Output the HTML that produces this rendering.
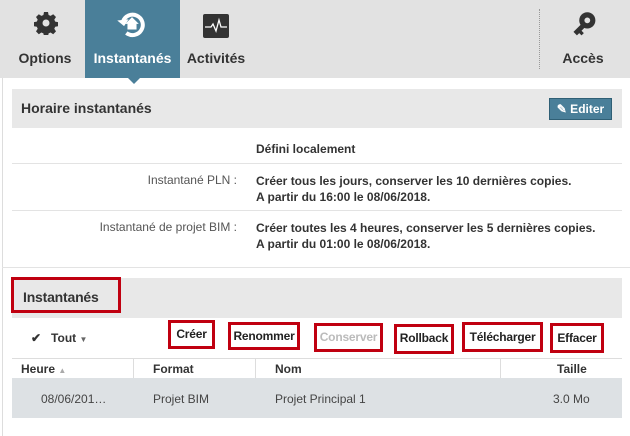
<!DOCTYPE html>
<html><head><meta charset="utf-8"><style>
*{box-sizing:border-box;margin:0;padding:0}
body{width:630px;height:436px;overflow:hidden;background:#fff;font-family:"Liberation Sans",sans-serif;color:#333;position:relative;font-size:12px}
.abs{position:absolute}
.top{left:0;top:0;width:630px;height:78px;background:#e2e2e2}
.tab{position:absolute;top:0;height:78px;text-align:center;font-weight:bold;font-size:14px;color:#333}
.tab .lbl{position:absolute;left:0;right:0;top:50px}
.rb{position:absolute;border:3px solid #c00010;font-weight:bold;font-size:12px;text-align:center;color:#222;letter-spacing:-0.2px}
</style></head><body>
<div class="abs top"></div>
<div class="tab" style="left:10px;width:70px">
<svg class="abs" style="left:24px;top:11px" width="24" height="24" viewBox="0 0 24 24"><path fill="#333" d="M10 1h4l.6 3 2 .9 2.6-1.7 2.8 2.8-1.7 2.6.9 2 3 .6v4l-3 .6-.9 2 1.7 2.6-2.8 2.8-2.6-1.7-2 .9-.6 3h-4l-.6-3-2-.9-2.6 1.7-2.8-2.8 1.7-2.6-.9-2-3-.6v-4l3-.6.9-2-1.7-2.6 2.8-2.8 2.6 1.7 2-.9z"/><circle cx="12" cy="12" r="3.5" fill="#e2e2e2"/></svg>
<div class="lbl">Options</div></div>
<div class="tab" style="left:85px;width:95px;background:#4a7f99;color:#fff">
<svg class="abs" style="left:30px;top:8px" width="34" height="34" viewBox="0 0 30 30"><path d="M7 12A9 9 0 1 1 10 22" fill="none" stroke="#fff" stroke-width="3.5"/><path d="M2 11l6 5 4-6z" fill="#fff"/><path d="M15 8l6 6h-2v5h-8v-5h-2z" fill="#fff"/></svg>
<div class="lbl">Instantanés</div>
<div class="abs" style="left:43px;top:78px;width:0;height:0;border-left:6px solid transparent;border-right:6px solid transparent;border-top:6px solid #4a7f99"></div></div>
<div class="tab" style="left:183px;width:66px">
<svg class="abs" style="left:20px;top:14px" width="26" height="24" viewBox="0 0 26 24"><rect width="26" height="24" rx="2" fill="#333"/><path d="M2 13h6l2-3 3 7 3-11 2 7h6" fill="none" stroke="#fff" stroke-width="1.3"/></svg>
<div class="lbl">Activités</div></div>
<div class="abs" style="left:539px;top:9px;height:60px;border-left:1px dotted #999"></div>
<div class="tab" style="left:553px;width:60px">
<svg class="abs" style="left:18px;top:10px" width="28" height="30" viewBox="0 0 24 26"><circle cx="14" cy="9" r="7" fill="#333"/><circle cx="14" cy="9" r="2.5" fill="#e2e2e2"/><path d="M9 12l-7 7 3 3 2-2 2 2 2-2-2-2 3-3z" fill="#333"/></svg>
<div class="lbl">Accès</div></div>

<div class="abs" style="left:2px;top:78px;height:358px;border-left:1px solid #ddd"></div>
<div class="abs" style="left:12px;top:89px;width:610px;height:39px;background:#e8e8e8"></div>
<div class="abs" style="left:21px;top:100px;font-size:14px;font-weight:bold;color:#333">Horaire instantanés</div>
<div class="abs" style="left:549px;top:98px;width:63px;height:22px;background:#4a7f99;border:1px solid #2f5f75;color:#fff;font-weight:bold;font-size:12px;line-height:20px;text-align:center">✎ Editer</div>
<div class="abs" style="left:256px;top:142px;font-weight:bold">Défini localement</div>
<div class="abs" style="left:12px;top:163px;width:610px;border-top:1px solid #e3e3e3"></div>
<div class="abs" style="left:0;width:237px;text-align:right;top:173px;color:#555">Instantané PLN :</div>
<div class="abs" style="left:256px;top:173px;font-weight:bold;line-height:16px">Créer tous les jours, conserver les 10 dernières copies.<br>A partir du 16:00 le 08/06/2018.</div>
<div class="abs" style="left:12px;top:210px;width:610px;border-top:1px solid #e3e3e3"></div>
<div class="abs" style="left:0;width:237px;text-align:right;top:220px;color:#555">Instantané de projet BIM :</div>
<div class="abs" style="left:256px;top:220px;font-weight:bold;line-height:16px">Créer toutes les 4 heures, conserver les 5 dernières copies.<br>A partir du 01:00 le 08/06/2018.</div>
<div class="abs" style="left:2px;top:267px;width:628px;border-top:1px solid #e3e3e3"></div>

<div class="abs" style="left:12px;top:278px;width:610px;height:40px;background:#e8e8e8"></div>
<div class="rb" style="left:11px;top:277px;width:110px;height:36px;font-size:14px;text-align:left;padding:9px 0 0 9px;color:#333">Instantanés</div>
<div class="abs" style="left:31px;top:331px;font-weight:bold">✔&nbsp;&nbsp;&nbsp;Tout <span style="font-size:8px;color:#666">▼</span></div>
<div class="rb" style="left:168px;top:320px;width:47px;height:29px;line-height:23px">Créer</div>
<div class="rb" style="left:228px;top:322px;width:72px;height:28px;line-height:22px">Renommer</div>
<div class="rb" style="left:314px;top:323px;width:69px;height:29px;line-height:23px;color:#bbb">Conserver</div>
<div class="rb" style="left:394px;top:324px;width:60px;height:30px;line-height:22px">Rollback</div>
<div class="rb" style="left:462px;top:322px;width:81px;height:30px;line-height:24px">Télécharger</div>
<div class="rb" style="left:550px;top:323px;width:54px;height:30px;line-height:24px">Effacer</div>
<div class="abs" style="left:12px;top:358px;width:610px;height:20px;border-top:1px solid #ddd"></div>
<div class="abs" style="left:133px;top:358px;height:20px;border-left:1px solid #ddd"></div>
<div class="abs" style="left:255px;top:358px;height:20px;border-left:1px solid #ddd"></div>
<div class="abs" style="left:500px;top:358px;height:20px;border-left:1px solid #ddd"></div>
<div class="abs" style="left:21px;top:362px;font-weight:bold">Heure <span style="font-size:8px;color:#aaa">▲</span></div>
<div class="abs" style="left:153px;top:362px;font-weight:bold">Format</div>
<div class="abs" style="left:275px;top:362px;font-weight:bold">Nom</div>
<div class="abs" style="left:557px;top:362px;font-weight:bold">Taille</div>
<div class="abs" style="left:12px;top:378px;width:610px;height:40px;background:#dde1e4"></div>
<div class="abs" style="left:41px;top:392px;color:#444">08/06/201…</div>
<div class="abs" style="left:153px;top:392px;color:#444">Projet BIM</div>
<div class="abs" style="left:275px;top:392px;color:#444">Projet Principal 1</div>
<div class="abs" style="left:553px;top:392px;color:#444">3.0 Mo</div>
</body></html>
